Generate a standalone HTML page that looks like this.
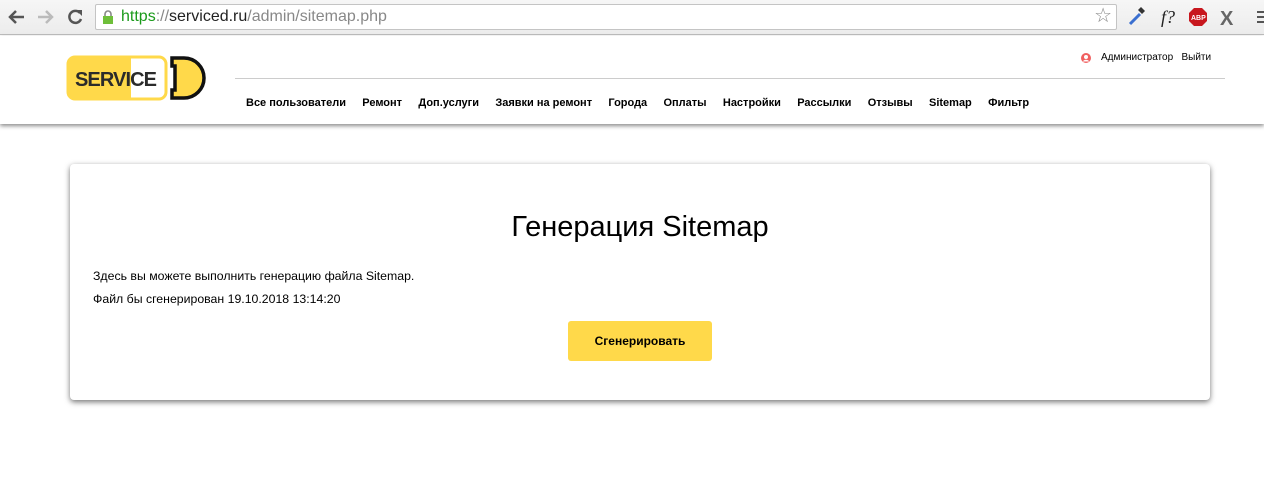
<!DOCTYPE html>
<html><head><meta charset="utf-8"><style>
*{margin:0;padding:0;box-sizing:border-box}
body{width:1264px;height:494px;background:#fff;font-family:"Liberation Sans",Arial,sans-serif;position:relative;overflow:hidden}
.chrome{position:absolute;left:0;top:0;width:1264px;height:35px;background:linear-gradient(#f6f6f6,#ececec);border-bottom:1px solid #bdbdbd}
.url{position:absolute;left:95px;top:4px;width:1022px;height:26px;background:#fff;border:1px solid #c4c4c4;border-radius:2px;font-size:16px;line-height:24px;padding-left:25px;color:#888}
.hdr{position:absolute;left:0;top:36px;width:1264px;height:88px;background:#fff;box-shadow:0 2px 4px rgba(0,0,0,.45)}
.nav{position:absolute;left:246px;top:97px;font-size:11px;font-weight:bold;color:#000;white-space:nowrap}
.nav span{margin-right:16.3px}
.card{position:absolute;left:70px;top:164px;width:1140px;height:236px;background:#fff;border-radius:4px;box-shadow:0 2px 6px rgba(0,0,0,.55)}
h1{position:absolute;left:0;width:100%;top:47px;text-align:center;font-weight:normal;font-size:29px;color:#000}
.p{position:absolute;left:23px;font-size:12.3px;color:#000}
.btn{position:absolute;left:498px;top:157px;width:144px;height:40px;background:#ffd94a;border-radius:3px;font-size:12px;font-weight:bold;text-align:center;line-height:40px}
</style></head><body>
<div class="chrome">
<svg width="95" height="35" style="position:absolute;left:0;top:0">
<path d="M10 17h14M16 11l-6 6 6 6" stroke="#555" stroke-width="2.5" fill="none"/>
<path d="M38 17h14M46 11l6 6-6 6" stroke="#bbb" stroke-width="2.5" fill="none"/>
<path d="M80 13a6 6 0 1 0 1 6" stroke="#555" stroke-width="2.5" fill="none"/><path d="M76 10h6v6z" fill="#555"/>
</svg>
<div class="url"><svg width="12" height="14" style="position:absolute;left:6px;top:5px"><rect x="1" y="6" width="10" height="8" fill="#6fbf3a"/><path d="M3 6V4a3 3 0 0 1 6 0v2" stroke="#888" stroke-width="1.6" fill="none"/></svg><span style="color:#1a9a1a">https</span>://<span style="color:#222">serviced.ru</span>/admin/sitemap.php
<span style="position:absolute;right:4px;top:-1px;font-size:20px;color:#888">☆</span></div>
<svg width="140" height="35" style="position:absolute;left:1124px;top:0">
<path d="M6 24l10-10" stroke="#3a6fd0" stroke-width="3"/><path d="M14 10l4 4 3-3-4-4z" fill="#333"/>
<text x="37" y="23" font-family="Liberation Serif" font-style="italic" font-size="18" fill="#222">f?</text>
<polygon points="70,8 78,8 83,13 83,21 78,26 70,26 65,21 65,13" fill="#c8171e"/>
<text x="67" y="20" font-size="7" font-weight="bold" fill="#fff" font-family="Liberation Sans">ABP</text>
<text x="96" y="25" font-size="20" font-weight="bold" fill="#666" font-family="Liberation Sans">X</text>
<path d="M133 12h7M133 17h7M133 22h7" stroke="#555" stroke-width="2"/>
</svg>
</div>
<div class="hdr">
<svg width="150" height="48" style="position:absolute;left:66px;top:19px">
<rect x="2" y="2" width="98" height="42" rx="7" fill="#fff" stroke="#ffd94a" stroke-width="3"/>
<path d="M9 3h56v40H9a6 6 0 0 1-6-6V9a6 6 0 0 1 6-6z" fill="#ffd94a"/>
<text x="9" y="31" font-family="Liberation Sans" font-weight="bold" font-size="20" fill="#2b2b2b" textLength="82">SERVICE</text>
<path d="M106 3h12a20 20 0 0 1 0 40h-12v-8h3v-24h-3z" fill="#ffd94a" stroke="#111" stroke-width="3.5"/>
</svg>
<div style="position:absolute;left:235px;top:42px;width:990px;height:1px;background:#ccc"></div>
<svg width="10" height="10" style="position:absolute;left:1081px;top:17px"><circle cx="5" cy="5" r="5" fill="#f06060"/><circle cx="5" cy="4" r="2" fill="#fff"/><path d="M1.8 8.5a3.5 3 0 0 1 6.4 0" fill="#fff"/></svg>
<div style="position:absolute;left:1101px;top:16px;font-size:10px;color:#000">Администратор &nbsp;&nbsp;Выйти</div>
</div>
<div class="nav"><span>Все пользователи</span><span>Ремонт</span><span>Доп.услуги</span><span>Заявки на ремонт</span><span>Города</span><span>Оплаты</span><span>Настройки</span><span>Рассылки</span><span>Отзывы</span><span>Sitemap</span><span>Фильтр</span></div>
<div class="card">
<h1>Генерация Sitemap</h1>
<div class="p" style="top:105px">Здесь вы можете выполнить генерацию файла Sitemap.</div>
<div class="p" style="top:128px">Файл бы сгенерирован 19.10.2018 13:14:20</div>
<div class="btn">Сгенерировать</div>
</div>
</body></html>
